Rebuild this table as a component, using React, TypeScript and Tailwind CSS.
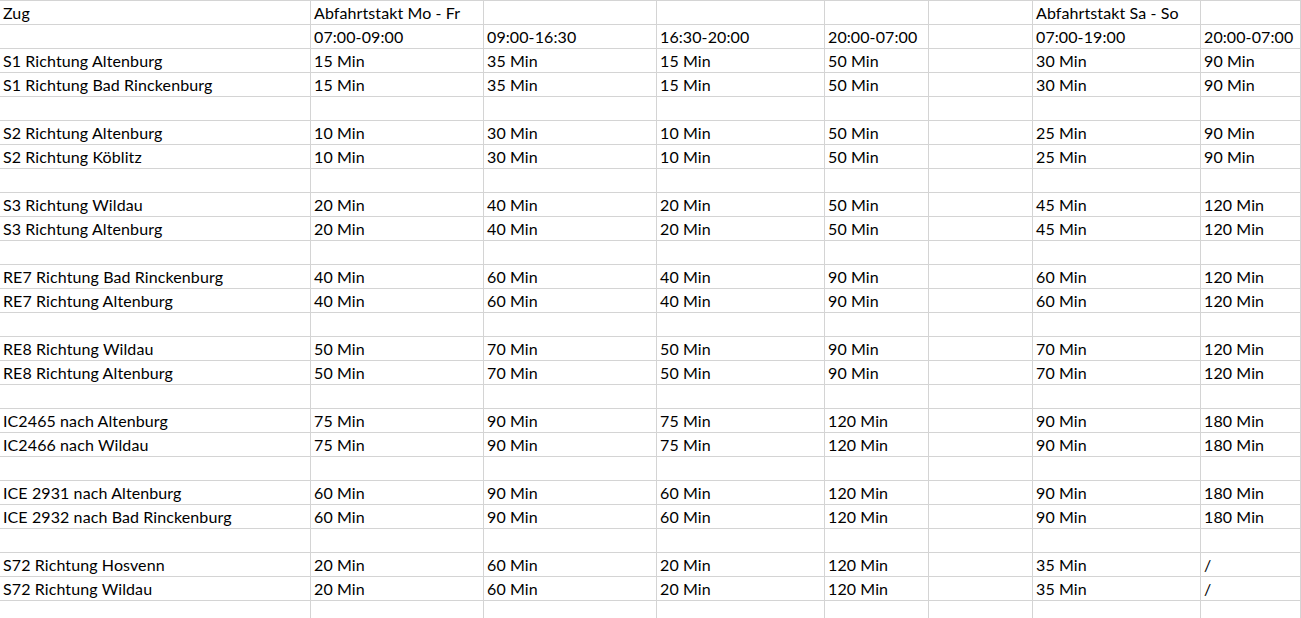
import React from "react";

// column widths include the 1px right border
const colWidths = ["w-[311px]", "w-[173px]", "w-[173px]", "w-[168px]", "w-[104px]", "w-[104px]", "w-[168px]", "w-[100px]"];

type Row = string[];

function trainRows(a: string, b: string, t: string[]): Row[] {
  const vals = t.map((v) => (v === "/" ? "/" : `${v} Min`));
  const cells = (name: string) => [name, vals[0], vals[1], vals[2], vals[3], "", vals[4], vals[5]];
  return [cells(a), cells(b), []];
}

const rows: Row[] = [
  ["Zug", "Abfahrtstakt Mo - Fr", "", "", "", "", "Abfahrtstakt Sa - So", ""],
  ["", "07:00-09:00", "09:00-16:30", "16:30-20:00", "20:00-07:00", "", "07:00-19:00", "20:00-07:00"],
  ...trainRows("S1 Richtung Altenburg", "S1 Richtung Bad Rinckenburg", ["15", "35", "15", "50", "30", "90"]),
  ...trainRows("S2 Richtung Altenburg", "S2 Richtung Köblitz", ["10", "30", "10", "50", "25", "90"]),
  ...trainRows("S3 Richtung Wildau", "S3 Richtung Altenburg", ["20", "40", "20", "50", "45", "120"]),
  ...trainRows("RE7 Richtung Bad Rinckenburg", "RE7 Richtung Altenburg", ["40", "60", "40", "90", "60", "120"]),
  ...trainRows("RE8 Richtung Wildau", "RE8 Richtung Altenburg", ["50", "70", "50", "90", "70", "120"]),
  ...trainRows("IC2465 nach Altenburg", "IC2466 nach Wildau", ["75", "90", "75", "120", "90", "180"]),
  ...trainRows("ICE 2931 nach Altenburg", "ICE 2932 nach Bad Rinckenburg", ["60", "90", "60", "120", "90", "180"]),
  ...trainRows("S72 Richtung Hosvenn", "S72 Richtung Wildau", ["20", "60", "20", "120", "35", "/"]),
];

export default function App() {
  return (
    <div className="h-[618px] w-[1301px] overflow-hidden bg-white text-black font-['Lato',sans-serif] text-[16px] tracking-[0.1px]">
      <div className="border-t border-[#d4d4d4]">
        {rows.map((row, ri) => (
          <div key={ri} className="flex h-[24px] border-b border-[#d4d4d4]">
            {colWidths.map((w, ci) => (
              <div
                key={ci}
                className={`${w} shrink-0 border-r border-[#d4d4d4] flex items-end pl-[3px] pb-[1px] leading-[20px] whitespace-nowrap overflow-visible`}
              >
                {row[ci] ?? ""}
              </div>
            ))}
          </div>
        ))}
      </div>
    </div>
  );
}
